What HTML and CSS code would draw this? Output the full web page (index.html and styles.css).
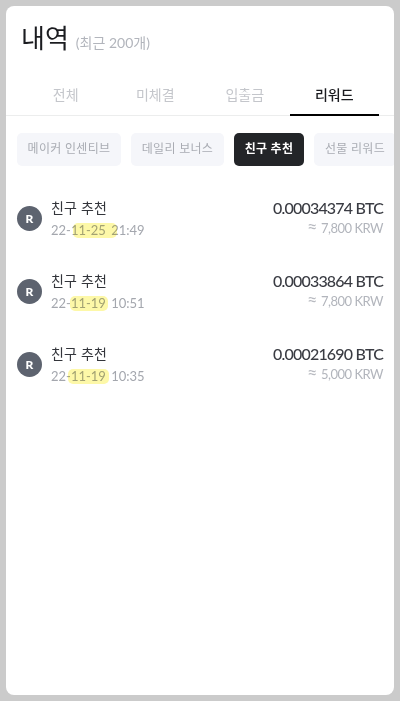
FILE: index.html
```html
<!DOCTYPE html>
<html lang="ko">
<head>
    <meta charset="UTF-8">
    <meta name="viewport" content="width=device-width, initial-scale=1.0">
    <title>내역</title>
    <link rel="stylesheet" href="styles.css">
</head>
<body>
    <div class="card">
        <div class="title-row">
            <h1>내역</h1>
            <span class="count">(최근 200개)</span>
        </div>

        <div class="tabs">
            <div class="tab">전체</div>
            <div class="tab">미체결</div>
            <div class="tab">입출금</div>
            <div class="tab active">리워드</div>
        </div>

        <div class="chips">
            <div class="chip chip-maker">메이커 인센티브</div>
            <div class="chip chip-daily">데일리 보너스</div>
            <div class="chip chip-friend active">친구 추천</div>
            <div class="chip chip-futures">선물 리워드</div>
        </div>

        <div class="list">
            <div class="row">
                <div class="badge">R</div>
                <div class="info">
                    <div class="name">친구 추천</div>
                    <div class="date"><span class="mark mark-a"></span>22-11-25 21:49</div>
                </div>
                <div class="amounts">
                    <div class="btc">0.00034374 BTC</div>
                    <div class="krw"><span class="approx">≈</span>7,800 KRW</div>
                </div>
            </div>
            <div class="row">
                <div class="badge">R</div>
                <div class="info">
                    <div class="name">친구 추천</div>
                    <div class="date"><span class="mark mark-b"></span>22-11-19 10:51</div>
                </div>
                <div class="amounts">
                    <div class="btc">0.00033864 BTC</div>
                    <div class="krw"><span class="approx">≈</span>7,800 KRW</div>
                </div>
            </div>
            <div class="row">
                <div class="badge">R</div>
                <div class="info">
                    <div class="name">친구 추천</div>
                    <div class="date"><span class="mark mark-c"></span>22-11-19 10:35</div>
                </div>
                <div class="amounts">
                    <div class="btc">0.00021690 BTC</div>
                    <div class="krw"><span class="approx">≈</span>5,000 KRW</div>
                </div>
            </div>
        </div>
    </div>
</body>
</html>
```

FILE: styles.css
```css
* { margin: 0; padding: 0; box-sizing: border-box; }

body {
    width: 400px;
    height: 701px;
    padding: 6px;
    background: #cbcbcb;
    font-family: Lato, "Noto Sans CJK KR", sans-serif;
    overflow: hidden;
}

.card {
    height: 689px;
    background: #fff;
    border-radius: 8px;
    overflow: hidden;
}

.title-row {
    display: flex;
    align-items: baseline;
    height: 68px;
    padding: 13px 0 0 15px;
}

h1 {
    font-size: 26px;
    font-weight: 400;
    line-height: 38px;
    color: #1b1c20;
}

.count {
    margin-left: 7px;
    font-size: 14px;
    color: #b2b5bc;
}

.tabs {
    display: flex;
    height: 42px;
    padding: 0 15px;
    border-bottom: 1px solid #eceded;
}

.tab {
    flex: 1;
    padding-top: 11px;
    text-align: center;
    font-size: 14px;
    line-height: 20px;
    color: #c4c6cb;
}

.tab.active {
    border-bottom: 2px solid #000;
    height: 42px;
    color: #1b1c20;
    font-weight: 500;
}

.chips {
    display: flex;
    gap: 10px;
    margin-top: 17px;
    padding-left: 11px;
}

.chip {
    flex: none;
    height: 33px;
    background: #f5f6fa;
    border-radius: 5px;
    font-size: 12px;
    line-height: 31px;
    text-align: center;
    letter-spacing: .3px;
    color: #a9acb3;
}

.chip-maker { width: 104px; }
.chip-daily { width: 93px; }
.chip-friend { width: 70px; }
.chip-futures { width: 82px; }

.chip.active {
    background: #232528;
    color: #fff;
    font-weight: 700;
}

.list {
    display: flex;
    flex-direction: column;
    gap: 23px;
    margin-top: 27px;
    padding: 0 11px;
}

.row {
    display: flex;
    align-items: center;
    height: 50px;
}

.badge {
    flex: none;
    width: 25px;
    height: 25px;
    margin-right: 9px;
    border-radius: 50%;
    background: #5d636f;
    color: #fff;
    font-size: 12px;
    font-weight: 900;
    line-height: 25px;
    text-align: center;
}

.info { flex: 1; }

.name {
    font-size: 14px;
    line-height: 21px;
    letter-spacing: .2px;
    color: #33353b;
}

.date {
    position: relative;
    margin-top: 3px;
    font-size: 13px;
    line-height: 19px;
    word-spacing: 2px;
    color: #a4a7ae;
}

/* yellow marker scribble over the date */
.mark {
    position: absolute;
    top: 2px;
    height: 15px;
    background: #fdf8a8;
    border-radius: 5px;
    mix-blend-mode: multiply;
}

.mark-a { left: 22px; width: 44px; }
.mark-b { left: 19px; width: 38px; }
.mark-c { left: 17px; width: 41px; }

.amounts {
    align-self: flex-start;
    margin-top: 4px;
    text-align: right;
}

.btc {
    font-size: 16px;
    font-weight: 500;
    line-height: 21px;
    letter-spacing: -.8px;
    color: #3a3c43;
}

.krw {
    margin-top: -1px;
    font-size: 13px;
    line-height: 19px;
    letter-spacing: -.5px;
    color: #b2b5bc;
}

.approx {
    margin-right: 4px;
    font-size: 18px;
    line-height: 1;
    color: #b8bac0;
}
```
